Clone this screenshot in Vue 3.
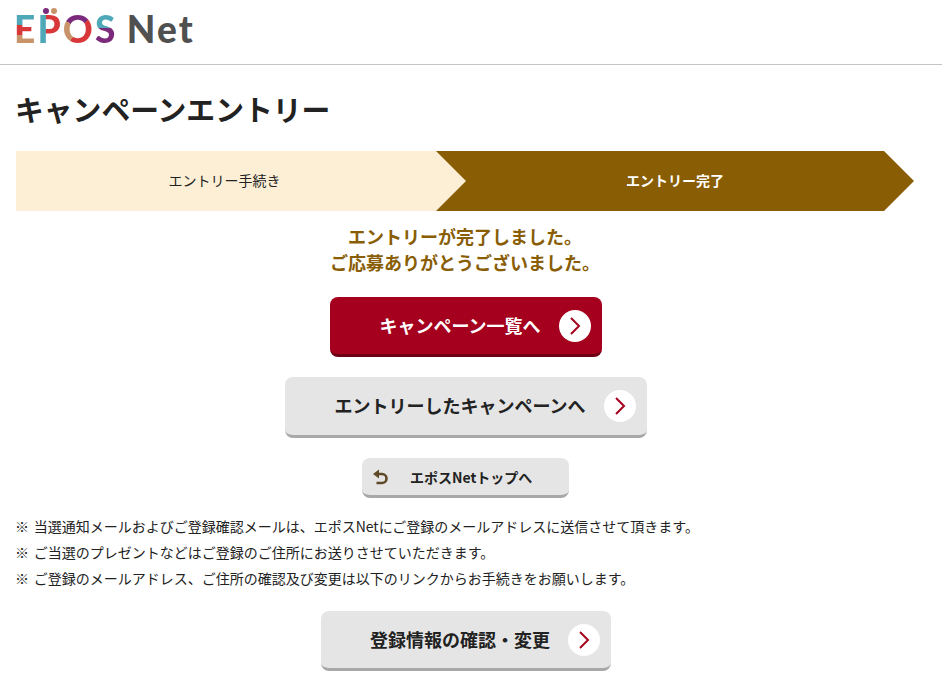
<template>
  <div class="page">
    <header class="site-header">
      <div class="logo">
        <span class="dots"><i class="dot purple"></i><i class="dot tan"></i></span>
        <span class="epos e">E</span><span class="epos p">P</span><span class="epos o">O</span><span class="epos s">S</span>
        <span class="net">Net</span>
      </div>
    </header>

    <main class="content">
      <h1 class="title">キャンペーンエントリー</h1>

      <div class="steps">
        <div class="step step-first">エントリー手続き</div>
        <div class="step step-last">エントリー完了</div>
      </div>

      <p class="message">エントリーが完了しました。<br />ご応募ありがとうございました。</p>

      <div class="actions">
        <a class="btn btn-red">
          <span class="label">キャンペーン一覧へ</span>
          <span class="circle">
            <svg width="14" height="20" viewBox="0 0 14 20"><path d="M3 2l8 8-8 8" fill="none" stroke="#a5001e" stroke-width="2" /></svg>
          </span>
        </a>
        <a class="btn btn-gray btn-tall">
          <span class="label">エントリーしたキャンペーンへ</span>
          <span class="circle">
            <svg width="14" height="20" viewBox="0 0 14 20"><path d="M3 2l8 8-8 8" fill="none" stroke="#a5001e" stroke-width="2" /></svg>
          </span>
        </a>
        <a class="btn-small">
          <svg class="back-icon" width="16" height="16" viewBox="0 0 16 16">
            <path d="M4 5h5a4.500 4.500 0 0 1 0 9H3.500" fill="none" stroke="#5f4a28" stroke-width="2.600" />
            <path d="M6 0.500v9L0 5z" fill="#5f4a28" />
          </svg>
          <span>エポスNetトップへ</span>
        </a>
      </div>

      <ul class="notes">
        <li v-for="note in notes" :key="note">{{ note }}</li>
      </ul>

      <div class="actions">
        <a class="btn btn-gray">
          <span class="label">登録情報の確認・変更</span>
          <span class="circle">
            <svg width="14" height="20" viewBox="0 0 14 20"><path d="M3 2l8 8-8 8" fill="none" stroke="#a5001e" stroke-width="2" /></svg>
          </span>
        </a>
      </div>
    </main>
  </div>
</template>

<script setup>
const notes = [
  '※ 当選通知メールおよびご登録確認メールは、エポスNetにご登録のメールアドレスに送信させて頂きます。',
  '※ ご当選のプレゼントなどはご登録のご住所にお送りさせていただきます。',
  '※ ご登録のメールアドレス、ご住所の確認及び変更は以下のリンクからお手続きをお願いします。'
];
</script>

<style>
html, body {
  margin: 0;
  background: #fff;
  overflow: hidden;
}
</style>

<style scoped>
.page {
  width: 942px;
  color: #222;
  font-family: "Noto Sans CJK JP", "Noto Sans", sans-serif;
}

.site-header {
  height: 64px;
  border-bottom: 1px solid #c4c4c4;
  padding-left: 14px;
}

.logo {
  position: relative;
  display: flex;
  align-items: center;
  height: 57px;
  font-family: "Lato", sans-serif;
  font-size: 37px;
  font-weight: 900;
  line-height: 1;
  letter-spacing: 2.200px;
}

.dots {
  position: absolute;
  left: 29px;
  top: 8px;
  display: flex;
  gap: 1.500px;
}

.dot {
  width: 6px;
  height: 6px;
  border-radius: 50%;
}

.dot.purple { background: #7b2a7c; }
.dot.tan { background: #c9936a; }

.epos {
  color: transparent;
  -webkit-background-clip: text;
  background-clip: text;
}

.e { background-image: linear-gradient(#4fa8b8 40%, #d9383a 40%, #d9383a 68%, #c9936a 68%); }
.p { background-image: linear-gradient(90deg, #4fa8b8 36%, #d9383a 36%); }
.o { background-image: conic-gradient(#7b2a7c 0deg, #7b2a7c 45deg, #d9383a 45deg, #d9383a 215deg, #c9936a 215deg, #c9936a 300deg, #7b2a7c 300deg); }
.s { background-image: linear-gradient(#4fa8b8 48%, #7b2a7c 48%); margin-right: 9px; }

.net {
  color: #505050;
}

.content {
  width: 900px;
  padding-left: 16px;
}

.title {
  margin: 26px 0 24px -1px;
  font-size: 28.800px;
  font-weight: 700;
  line-height: 36px;
}

.steps {
  display: flex;
  width: 898px;
  height: 60px;
  font-size: 14px;
}

.step {
  display: flex;
  align-items: center;
  justify-content: center;
  padding-bottom: 2px;
  box-sizing: border-box;
}

.step-first {
  position: relative;
  z-index: 1;
  flex: 0 0 450px;
  padding-right: 33px;
  background: #fcefd6;
  clip-path: polygon(0 0, calc(100% - 30px) 0, 100% 50%, calc(100% - 30px) 100%, 0 100%);
}

.step-last {
  flex: 1;
  margin-left: -30px;
  color: #fff;
  font-weight: 700;
  background: #895d04;
  clip-path: polygon(0 0, calc(100% - 30px) 0, 100% 50%, calc(100% - 30px) 100%, 0 100%);
}

.message {
  margin: 13px 2px 22px 0;
  color: #895d04;
  font-size: 18px;
  font-weight: 700;
  line-height: 25.500px;
  text-align: center;
}

.actions {
  display: flex;
  flex-direction: column;
  align-items: center;
  gap: 20px;
}

.btn {
  display: inline-flex;
  align-items: center;
  gap: 18px;
  box-sizing: border-box;
  height: 60px;
  padding: 0 11px 0 49px;
  border-radius: 8px;
  font-size: 18px;
  font-weight: 700;
}

.btn-tall {
  height: 61px;
}

.btn-red {
  color: #fff;
  background: #a5001e;
  border-bottom: 3px solid #6d0014;
}

.btn-gray {
  background: #e5e5e5;
  border-bottom: 3px solid #a8a8a8;
}

.label {
  margin-bottom: 2px;
}

.circle {
  display: flex;
  align-items: center;
  justify-content: center;
  width: 32px;
  height: 32px;
  border-radius: 50%;
  background: #fff;
}

.btn-small {
  display: inline-flex;
  align-items: center;
  box-sizing: border-box;
  width: 207px;
  height: 40px;
  margin-right: 1px;
  padding-left: 11px;
  border-radius: 8px;
  border-bottom: 3px solid #a8a8a8;
  background: #e5e5e5;
  font-size: 14px;
  font-weight: 700;
}

.back-icon {
  margin-right: 21px;
}

.notes {
  margin: 15px 0 20px -1px;
  padding: 0;
  list-style: none;
  font-size: 14px;
  line-height: 26px;
  word-spacing: 1.500px;
}
</style>
